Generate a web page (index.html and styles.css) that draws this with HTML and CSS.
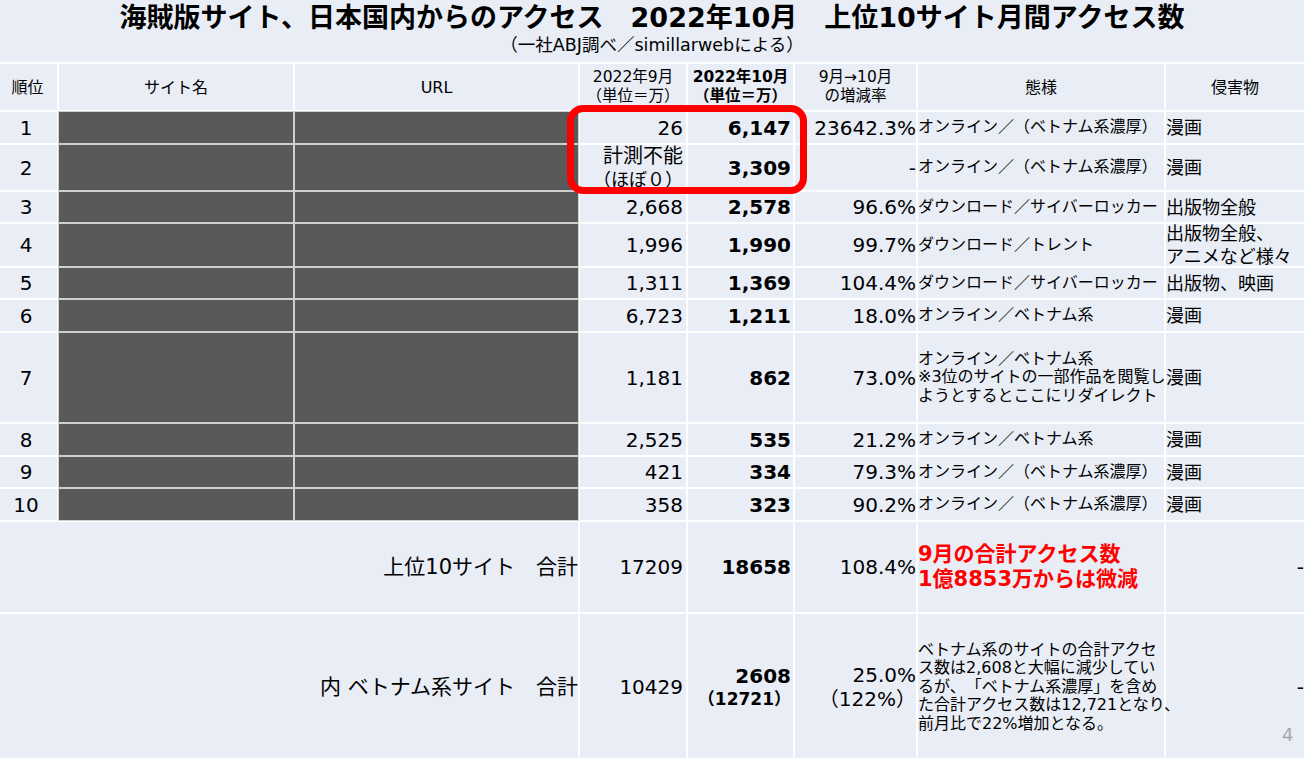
FILE: index.html
```html
<!DOCTYPE html>
<html lang="ja">
<head>
<meta charset="utf-8">
<title>海賊版サイト 月間アクセス数</title>
<link rel="stylesheet" href="styles.css">
</head>
<body>
<div class="slide">
  <header class="head">
    <h1 class="title">海賊版サイト、日本国内からのアクセス　2022年10月　上位10サイト月間アクセス数</h1>
    <p class="sub">（一社ABJ調べ／simillarwebによる）</p>
  </header>

  <div class="grid">
    <div class="cell hd rk">順位</div>
    <div class="cell hd">サイト名</div>
    <div class="cell hd">URL</div>
    <div class="cell hd hn"><span>2022年9月<br>（単位＝万）</span></div>
    <div class="cell hd hn b"><span>2022年10月<br>（単位＝万）</span></div>
    <div class="cell hd hn"><span>9月→10月<br>の増減率</span></div>
    <div class="cell hd">態様</div>
    <div class="cell hd">侵害物</div>

    <div class="cell ctr">1</div><div class="cell dark"></div><div class="cell dark"></div>
    <div class="cell num p4">26</div><div class="cell num p5 b">6,147</div><div class="cell num">23642.3%</div>
    <div class="cell desc">オンライン／（ベトナム系濃厚）</div><div class="cell kind">漫画</div>

    <div class="cell ctr">2</div><div class="cell dark"></div><div class="cell dark"></div>
    <div class="cell num p4 twol"><span><span class="line">計測不能</span><span class="line sm18">（ほぼ０）</span></span></div>
    <div class="cell num p5 b">3,309</div><div class="cell num">-</div>
    <div class="cell desc">オンライン／（ベトナム系濃厚）</div><div class="cell kind">漫画</div>

    <div class="cell ctr">3</div><div class="cell dark"></div><div class="cell dark"></div>
    <div class="cell num p4">2,668</div><div class="cell num p5 b">2,578</div><div class="cell num">96.6%</div>
    <div class="cell desc">ダウンロード／サイバーロッカー</div><div class="cell kind">出版物全般</div>

    <div class="cell ctr">4</div><div class="cell dark"></div><div class="cell dark"></div>
    <div class="cell num p4">1,996</div><div class="cell num p5 b">1,990</div><div class="cell num">99.7%</div>
    <div class="cell desc">ダウンロード／トレント</div><div class="cell kind"><span>出版物全般、<br>アニメなど様々</span></div>

    <div class="cell ctr">5</div><div class="cell dark"></div><div class="cell dark"></div>
    <div class="cell num p4">1,311</div><div class="cell num p5 b">1,369</div><div class="cell num">104.4%</div>
    <div class="cell desc">ダウンロード／サイバーロッカー</div><div class="cell kind">出版物、映画</div>

    <div class="cell ctr">6</div><div class="cell dark"></div><div class="cell dark"></div>
    <div class="cell num p4">6,723</div><div class="cell num p5 b">1,211</div><div class="cell num">18.0%</div>
    <div class="cell desc">オンライン／ベトナム系</div><div class="cell kind">漫画</div>

    <div class="cell ctr">7</div><div class="cell dark"></div><div class="cell dark"></div>
    <div class="cell num p4">1,181</div><div class="cell num p5 b">862</div><div class="cell num">73.0%</div>
    <div class="cell desc"><span>オンライン／ベトナム系<br>※3位のサイトの一部作品を閲覧し<br>ようとするとここにリダイレクト</span></div><div class="cell kind">漫画</div>

    <div class="cell ctr">8</div><div class="cell dark"></div><div class="cell dark"></div>
    <div class="cell num p4">2,525</div><div class="cell num p5 b">535</div><div class="cell num">21.2%</div>
    <div class="cell desc">オンライン／ベトナム系</div><div class="cell kind">漫画</div>

    <div class="cell ctr">9</div><div class="cell dark"></div><div class="cell dark"></div>
    <div class="cell num p4">421</div><div class="cell num p5 b">334</div><div class="cell num">79.3%</div>
    <div class="cell desc">オンライン／（ベトナム系濃厚）</div><div class="cell kind">漫画</div>

    <div class="cell ctr">10</div><div class="cell dark"></div><div class="cell dark"></div>
    <div class="cell num p4">358</div><div class="cell num p5 b">323</div><div class="cell num">90.2%</div>
    <div class="cell desc">オンライン／（ベトナム系濃厚）</div><div class="cell kind">漫画</div>

    <div class="cell label">上位10サイト　合計</div>
    <div class="cell num p4">17209</div><div class="cell num p5 b">18658</div><div class="cell num">108.4%</div>
    <div class="cell desc red"><span>9月の合計アクセス数<br>1億8853万からは微減</span></div>
    <div class="cell num">-</div>

    <div class="cell label">内 ベトナム系サイト　合計</div>
    <div class="cell num p4">10429</div>
    <div class="cell num p5 b"><span><span class="line">2608</span><span class="line sm">（12721）</span></span></div>
    <div class="cell num"><span><span class="line">25.0%</span><span class="line">（122%）</span></span></div>
    <div class="cell desc"><span>ベトナム系のサイトの合計アクセ<br>ス数は2,608と大幅に減少してい<br>るが、「ベトナム系濃厚」を含め<br>た合計アクセス数は12,721となり、<br>前月比で22%増加となる。</span></div>
    <div class="cell num">-</div>
  </div>

  <div class="highlight"></div>
  <div class="pageno">4</div>
</div>
</body>
</html>
```

FILE: styles.css
```css
html, body {
  margin: 0;
  padding: 0;
  overflow: hidden;
}

body {
  background: #e9edf6;
  color: #000;
  font-family: "DejaVu Sans", "Noto Sans CJK JP", sans-serif;
  text-spacing-trim: space-all;
}

.slide {
  position: relative;
  width: 1304px;
  height: 758px;
  overflow: hidden;
}

.head {
  height: 62px;
  box-sizing: border-box;
  padding-top: 1px;
  text-align: center;
}

.title {
  margin: 0;
  font-size: 27px;
  line-height: 34px;
  font-weight: bold;
  white-space: nowrap;
}

.sub {
  margin: 0;
  font-size: 17.5px;
  line-height: 20px;
}

.grid {
  display: grid;
  width: 1304px;
  grid-template-columns: 57px 234px 283px 106px 105px 121px 246px 138px;
  grid-template-rows: 46px 31px 45px 30px 42px 30px 31px 89px 31px 30px 31px 90px 146px;
  gap: 2px;
  padding-top: 2px;
  background: #ffffff;
}

.cell {
  background: #e9edf6;
  display: flex;
  align-items: center;
  min-width: 0;
  white-space: nowrap;
  font-size: 20px;
  line-height: 24px;
}

.hd {
  font-size: 16px;
  line-height: 19px;
  justify-content: center;
  text-align: center;
}

.hd.hn {
  font-size: 15.5px;
}

.rk {
  padding-right: 2px;
}

.ctr {
  justify-content: center;
  text-align: center;
  padding-right: 5px;
}

.num {
  justify-content: flex-end;
  text-align: right;
}

.p4 { padding-right: 3px; }
.p5 { padding-right: 2px; }

.b { font-weight: bold; }

.dark {
  background: #595959;
  outline: 1px solid #cfcfcf;
}

.desc {
  font-size: 16px;
  line-height: 18.4px;
  z-index: 1;
}

.kind {
  font-size: 18px;
  line-height: 23px;
}

.label {
  grid-column: span 3;
  justify-content: flex-end;
  font-size: 21px;
}

.red {
  color: #ff0000;
  font-weight: bold;
  font-size: 21px;
  line-height: 25px;
}

.line { display: block; }

.twol { line-height: 23px; }

.sm18 { font-size: 18px; }

.sm {
  font-size: 17px;
  line-height: 22px;
}

.highlight {
  position: absolute;
  left: 567px;
  top: 105px;
  width: 240px;
  height: 89px;
  box-sizing: border-box;
  border: 7px solid #ff0000;
  border-radius: 16px;
}

.pageno {
  position: absolute;
  left: 1282px;
  top: 724px;
  font-size: 18px;
  line-height: 22px;
  color: #a6a6a6;
}
```
